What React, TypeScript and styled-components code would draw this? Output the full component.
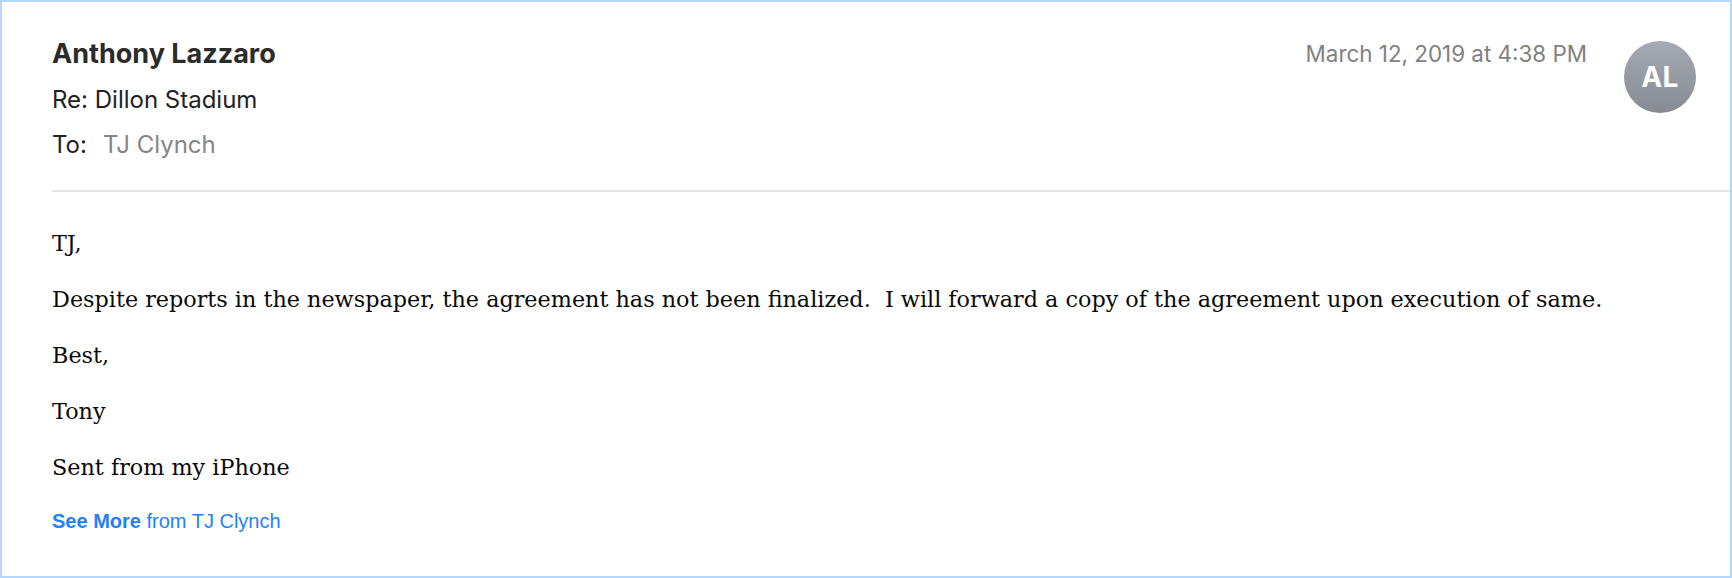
import React from "react";
import styled, { createGlobalStyle } from "styled-components";

const Global = createGlobalStyle`
  html, body { margin: 0; padding: 0; background: #ffffff; }
  * { box-sizing: border-box; }
`;

const Frame = styled.div`
  width: 1732px;
  height: 578px;
  border: 2px solid #b5d6fb;
  background: #ffffff;
  overflow: hidden;
`;

const Header = styled.header`
  display: flex;
  justify-content: space-between;
  align-items: flex-start;
  margin-left: 50px;
  padding: 0 34px 0 0;
  height: 190px;
  border-bottom: 2px solid #e6e6e6;
`;

const Meta = styled.div`
  display: flex;
  flex-direction: column;
  padding-top: 37px;
  font-family: Inter, "Liberation Sans", sans-serif;
`;

const Sender = styled.div`
  font-size: 27px;
  font-weight: 700;
  color: #2b2b2b;
  line-height: 30px;
`;

const Line = styled.div`
  font-size: 24px;
  color: #222222;
  line-height: 30px;
  margin-top: 15.5px;
  display: flex;
  gap: 16px;
`;

const Muted = styled.span`
  color: #858585;
`;

const Right = styled.div`
  display: flex;
  align-items: flex-start;
  gap: 37px;
  padding-top: 38px;
`;

const DateText = styled.div`
  font-family: Inter, "Liberation Sans", sans-serif;
  font-size: 22.4px;
  color: #818181;
  line-height: 28px;
`;

const Avatar = styled.div`
  width: 72px;
  height: 72px;
  border-radius: 50%;
  margin-top: 1px;
  background: linear-gradient(180deg, #a6aab3 0%, #868a93 100%);
  color: #ffffff;
  display: flex;
  align-items: center;
  justify-content: center;
  font-family: Inter, "Liberation Sans", sans-serif;
  font-weight: 700;
  font-size: 28px;
  letter-spacing: 0.5px;
`;

const Body = styled.main`
  padding: 36.5px 0 0 50px;
  font-family: "DejaVu Serif", "Liberation Serif", serif;
  color: #0a0a0a;
`;

const Para = styled.p`
  margin: 0 0 28px 0;
  font-size: 22.3px;
  line-height: 28px;
  white-space: pre-wrap;
`;

const More = styled.div`
  margin-top: 0.5px;
  font-family: "Liberation Sans", Arial, sans-serif;
  font-size: 20px;
  line-height: 24px;
  color: #1f82f8;
`;

const Strong = styled.b`
  font-weight: 700;
`;

export default function App() {
  return (
    <>
      <Global />
      <Frame>
        <Header>
          <Meta>
            <Sender>Anthony Lazzaro</Sender>
            <Line>Re: Dillon Stadium</Line>
            <Line>
              <span>To:</span>
              <Muted>TJ Clynch</Muted>
            </Line>
          </Meta>
          <Right>
            <DateText>March 12, 2019 at 4:38 PM</DateText>
            <Avatar>AL</Avatar>
          </Right>
        </Header>
        <Body>
          <Para>TJ,</Para>
          <Para>
            {"Despite reports in the newspaper, the agreement has not been finalized.  I will forward a copy of the agreement upon execution of same."}
          </Para>
          <Para>Best,</Para>
          <Para>Tony</Para>
          <Para>Sent from my iPhone</Para>
          <More>
            <Strong>See More</Strong> from TJ Clynch
          </More>
        </Body>
      </Frame>
    </>
  );
}
